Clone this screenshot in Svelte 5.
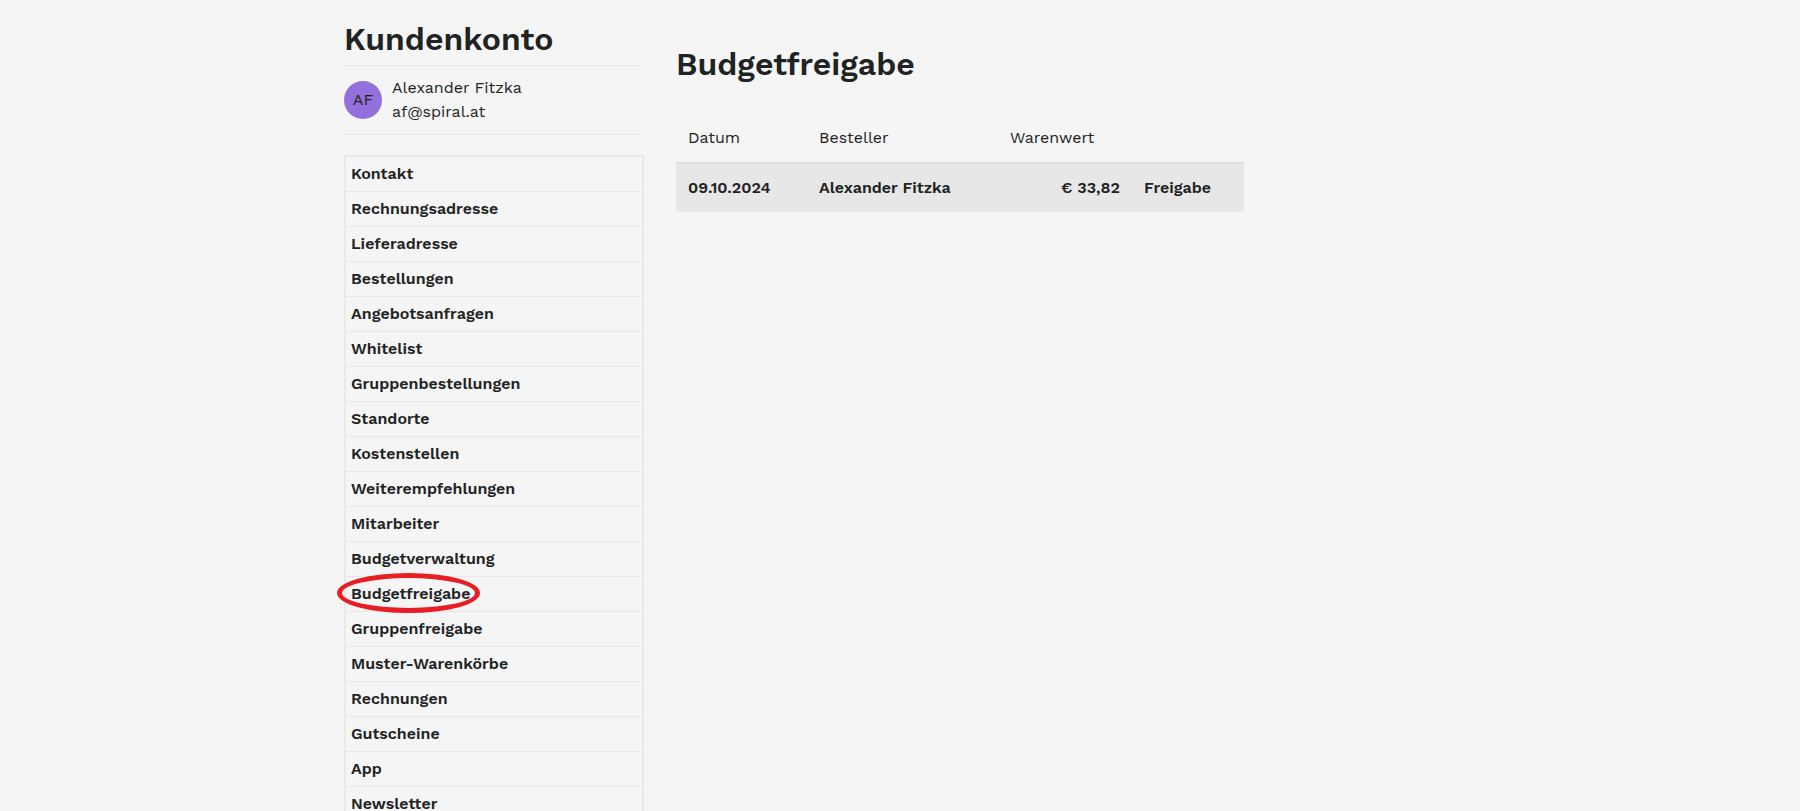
<script lang="ts">
  const user = { name: "Alexander Fitzka", email: "af@spiral.at", initials: "AF" };

  const menu = [
    "Kontakt",
    "Rechnungsadresse",
    "Lieferadresse",
    "Bestellungen",
    "Angebotsanfragen",
    "Whitelist",
    "Gruppenbestellungen",
    "Standorte",
    "Kostenstellen",
    "Weiterempfehlungen",
    "Mitarbeiter",
    "Budgetverwaltung",
    "Budgetfreigabe",
    "Gruppenfreigabe",
    "Muster-Warenkörbe",
    "Rechnungen",
    "Gutscheine",
    "App",
    "Newsletter",
  ];
  const marked = "Budgetfreigabe";

  const orders = [
    { date: "09.10.2024", customer: "Alexander Fitzka", value: "€ 33,82" },
  ];
</script>

<div class="page">
  <aside class="sidebar">
    <h2>Kundenkonto</h2>
    <div class="user">
      <span class="avatar">{user.initials}</span>
      <div>
        <div>{user.name}</div>
        <div>{user.email}</div>
      </div>
    </div>
    <nav class="menu">
      {#each menu as item (item)}
        <a href="#{item.toLowerCase()}">
          <span class:marked={item === marked}>{item}</span>
        </a>
      {/each}
    </nav>
  </aside>

  <main>
    <h1>Budgetfreigabe</h1>
    <table>
      <thead>
        <tr>
          <th class="date">Datum</th>
          <th class="customer">Besteller</th>
          <th class="value">Warenwert</th>
          <th></th>
        </tr>
      </thead>
      <tbody>
        {#each orders as order}
          <tr>
            <td>{order.date}</td>
            <td>{order.customer}</td>
            <td class="amount">{order.value}</td>
            <td><a href="#freigabe">Freigabe</a></td>
          </tr>
        {/each}
      </tbody>
    </table>
  </main>
</div>

<style>
  :global(html) {
    overflow: hidden;
  }
  :global(body) {
    margin: 0;
    background: #f5f5f5;
  }
  .page {
    display: grid;
    grid-template-columns: 300px 1fr;
    column-gap: 32px;
    max-width: 1112px;
    margin: 0 auto;
    font-family: "Work Sans", Inter, sans-serif;
    font-size: 16px;
    line-height: 24px;
    color: #212323;
  }
  a {
    color: inherit;
    text-decoration: none;
  }
  h1,
  h2 {
    margin: 0;
    font-size: 32px;
    line-height: 40px;
    font-weight: 600;
  }
  h2 {
    padding: 19px 0 6px;
  }
  h1 {
    padding: 44px 0 30px;
  }
  .user {
    display: flex;
    align-items: center;
    gap: 10px;
    padding: 10px 0;
    margin-bottom: 20px;
    border: solid #e9e9e9;
    border-width: 1px 0;
  }
  .avatar {
    width: 38px;
    border-radius: 50%;
    background: #9370db;
    line-height: 38px;
    text-align: center;
  }
  .menu {
    border: 2px solid #e9e9e9;
  }
  .menu a {
    display: block;
    padding: 5px;
    border-bottom: 1px solid #e9e9e9;
    font-weight: 600;
  }
  .menu span {
    position: relative;
  }
  .marked::after {
    content: "";
    position: absolute;
    inset: -11px -10px -10px -14px;
    border: 5px solid #e81e25;
    border-radius: 50%;
  }
  table {
    width: 568px;
    max-width: 100%;
    border-spacing: 0;
    table-layout: fixed;
  }
  th,
  td {
    padding: 12px;
    text-align: left;
  }
  th {
    font-weight: 400;
  }
  td {
    border-top: 2px solid #dddfe0;
    font-weight: 600;
  }
  tbody tr {
    background: #e7e7e7;
  }
  .date {
    width: 107px;
  }
  .customer {
    width: 167px;
  }
  .value {
    width: 110px;
  }
  .amount {
    text-align: right;
  }
</style>
